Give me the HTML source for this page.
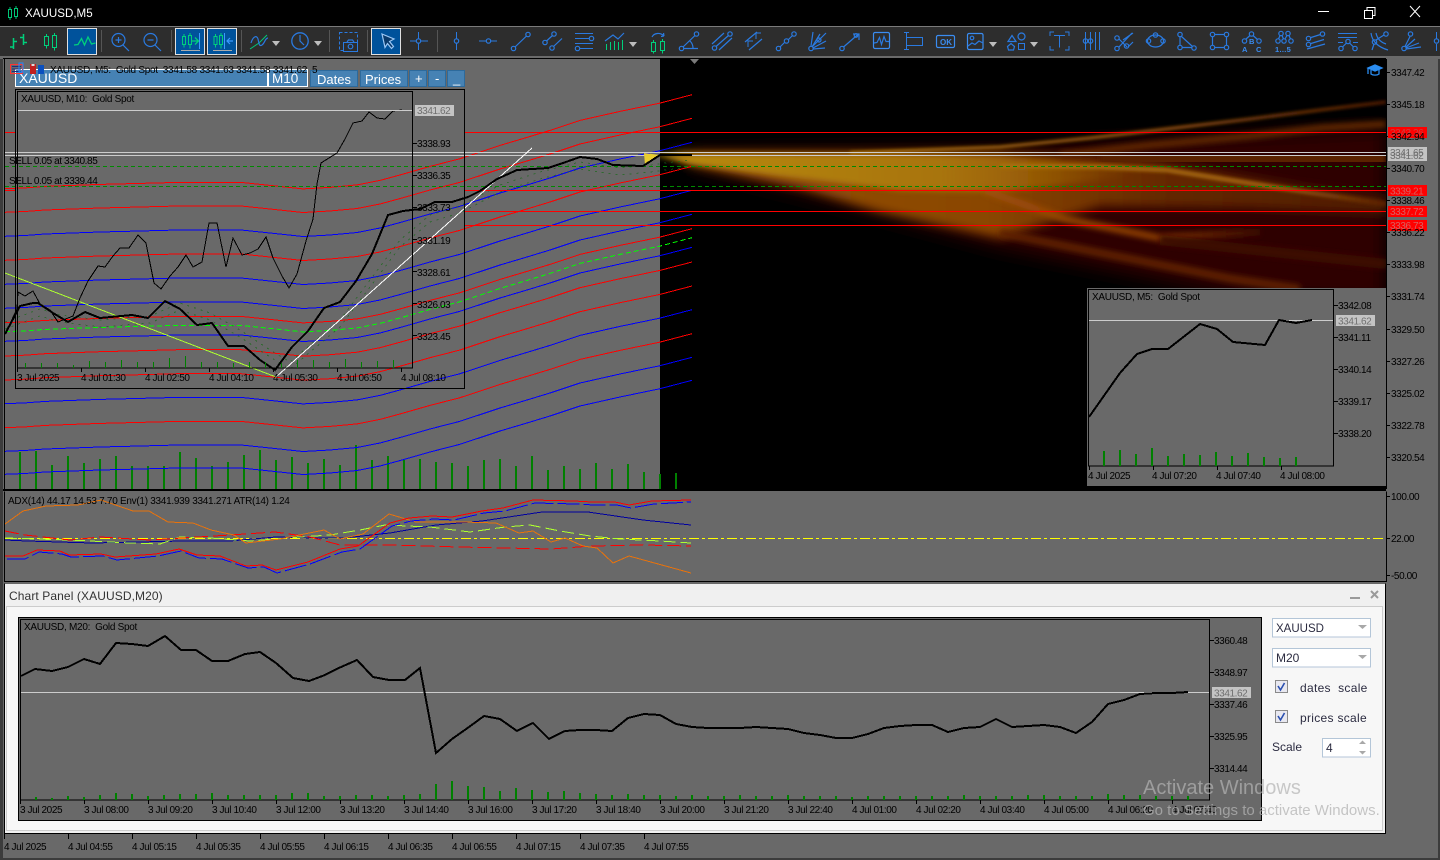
<!DOCTYPE html>
<html>
<head>
<meta charset="utf-8">
<title>XAUUSD,M5</title>
<style>
html,body{margin:0;padding:0;width:1440px;height:860px;overflow:hidden;background:#3c3c3c}
svg{display:block;position:absolute;left:0;top:0}
text{font-family:"Liberation Sans",sans-serif;font-size:10px;letter-spacing:-.4px;fill:#000;white-space:pre}
.g{fill:#6f6f6f}
.t{letter-spacing:-.28px}
.u{font-size:13px;letter-spacing:0;fill:#fff}
.p{font-size:12px;letter-spacing:.3px;fill:#2b2b40}
.w1{font-size:20px;letter-spacing:0;fill:#b4b4b4;opacity:.7}
.w2{font-size:15px;letter-spacing:0;fill:#b4b4b4;opacity:.75}
.c{shape-rendering:crispEdges}
</style>
</head>
<body>
<svg width="1440" height="860" viewBox="0 0 1440 860" xmlns="http://www.w3.org/2000/svg">
<defs>
<filter id="b0" x="-10%" y="-50%" width="120%" height="200%"><feGaussianBlur stdDeviation="9"/></filter>
<filter id="b1" x="-10%" y="-50%" width="120%" height="200%"><feGaussianBlur stdDeviation="5"/></filter>
<filter id="b2" x="-10%" y="-100%" width="120%" height="300%"><feGaussianBlur stdDeviation="1.6"/></filter>
<filter id="b3" x="-10%" y="-100%" width="120%" height="300%"><feGaussianBlur stdDeviation="3"/></filter>
<clipPath id="heat"><rect x="660" y="59" width="726" height="430"/></clipPath>
<linearGradient id="gOr" gradientUnits="userSpaceOnUse" x1="660" y1="0" x2="1386" y2="0">
<stop offset="0" stop-color="#94520a"/><stop offset=".45" stop-color="#8a4604"/><stop offset=".7" stop-color="#642800"/><stop offset="1" stop-color="#4e1a00"/>
</linearGradient>
<linearGradient id="gGo" gradientUnits="userSpaceOnUse" x1="660" y1="0" x2="1130" y2="0">
<stop offset="0" stop-color="#b88a10"/><stop offset=".6" stop-color="#a8740c"/><stop offset="1" stop-color="#a8740c" stop-opacity="0"/>
</linearGradient>
<linearGradient id="gUp" gradientUnits="userSpaceOnUse" x1="850" y1="0" x2="1386" y2="0">
<stop offset="0" stop-color="#a8740c"/><stop offset=".55" stop-color="#a05a12"/><stop offset="1" stop-color="#5a1e00"/>
</linearGradient>
<linearGradient id="gMid" gradientUnits="userSpaceOnUse" x1="1000" y1="0" x2="1386" y2="0">
<stop offset="0" stop-color="#a8700e"/><stop offset=".7" stop-color="#9a5a10"/><stop offset="1" stop-color="#5a2000"/>
</linearGradient>
<linearGradient id="gLow" gradientUnits="userSpaceOnUse" x1="985" y1="0" x2="1260" y2="0">
<stop offset="0" stop-color="#a05008"/><stop offset=".6" stop-color="#8a3c04"/><stop offset="1" stop-color="#3a0a00"/>
</linearGradient>
<path id="band" fill="none" d="M5 474.3L25 473.5 45 472 100 470 140 469 178 468 241 468 270 471 303 474.5 330 473 357 470.5 380 466 402 460 430 452 460 444.3 500 431 527 423 550 416 580 406 620 397 660 388.7 692 380.3"/>
</defs>

<!-- window -->
<rect width="1440" height="860" fill="#3c3c3c"/>
<rect width="1440" height="26" fill="#000"/>
<rect y="26" width="1440" height="1" fill="#7a7a7a"/>
<rect y="27" width="1440" height="29" fill="#2d2d2d"/>
<rect y="56" width="1440" height="3" fill="#6a6a6a"/>
<rect x="3" y="58" width="1435" height="800" fill="#696969"/>
<rect x="3" y="58" width="1383" height="1" fill="#000"/>
<rect class="c" x="4" y="59" width="1" height="430" fill="#000"/>

<!-- title bar -->
<g class="c" fill="none" stroke="#00c878">
<rect x="8.5" y="9.5" width="3" height="8"/><path d="M10 7v2M10 18v2"/>
<rect x="14.5" y="8.5" width="3" height="8"/><path d="M16 6v2M16 17v2"/>
</g>
<text x="25" y="17" style="font-size:11.6px;letter-spacing:0;fill:#fff">XAUUSD,M5</text>
<g fill="none" stroke="#fff" stroke-width="1">
<path class="c" d="M1318 11.5h11"/>
<path class="c" d="M1364.5 10.5h8v8h-8zM1367 10V7.5h8v8h-2.5"/>
<path d="M1410 6l10 11M1420 6l-10 11"/>
</g>

<!-- toolbar separators -->
<g class="c" fill="#555">
<rect x="101" y="30" width="1" height="22"/><rect x="171" y="30" width="1" height="22"/><rect x="241" y="30" width="1" height="22"/><rect x="329" y="30" width="1" height="22"/><rect x="367" y="30" width="1" height="22"/><rect x="437" y="30" width="1" height="22"/>
</g>
<!-- selected buttons -->
<g fill="#00529b" stroke="#e0e0e0" class="c">
<rect x="67.5" y="28.5" width="29" height="26"/>
<rect x="175.5" y="28.5" width="29" height="26"/>
<rect x="207.5" y="28.5" width="29" height="26"/>
<rect x="371.5" y="28.5" width="29" height="26"/>
</g>

<!-- green icons -->
<g fill="none" stroke="#00d07c" stroke-width="1.3">
<path stroke-width="1.5" d="M13.5 38v11M10 47h3.5M13.5 41.500h3.5M23.500 34v11M20 37.500h3.500M23.500 42.500h3.500"/>
<rect class="c" x="44.5" y="36.5" width="4" height="9"/><path class="c" d="M46.5 34v2.5M46.5 45.5v3"/>
<rect class="c" x="52.5" y="35.5" width="4" height="12"/><path class="c" d="M54.5 33v2.5M54.5 47.5v3"/>
<path d="M74 45l4-.5 3.5-6 3 6.5 3.5-8 3.5 7 4-1"/>
<rect class="c" x="182.5" y="36.5" width="3" height="8"/><path class="c" d="M184 34v2.5M184 44.5v3"/>
<rect class="c" x="188.5" y="35.5" width="3" height="9"/><path class="c" d="M190 33v2.5M190 44.5v4"/>
<path d="M191 41h7M195 37.5l3.5 3.5-3.5 3.5"/>
<rect class="c" x="214" y="36.5" width="3" height="8"/><path class="c" d="M215.5 34v2.5M215.5 44.5v3"/>
<rect class="c" x="219.5" y="35.5" width="3" height="9"/><path class="c" d="M221 33v2.5M221 44.5v4"/>
<path d="M250 49l9-6 8-8" stroke="#00c878" stroke-width="1"/>
<rect class="c" x="651.5" y="42.5" width="4" height="9"/><path class="c" d="M653.5 40v2.5M653.5 51.5v2"/>
<rect class="c" x="660.5" y="41.5" width="4" height="9"/><path class="c" d="M662.5 39v2.5M662.5 50.5v3"/>
<path class="c" d="M606.5 44v6M610.5 42v8M614.5 41v9M618.5 42v8M622.5 40v10"/>
</g>

<!-- blue icons -->
<g fill="none" stroke="#2a7ae0" stroke-width="1.2">
<circle cx="118.5" cy="40" r="6.5"/><path d="M123 45l6 6M115.5 40h6M118.5 37v6"/>
<circle cx="150.5" cy="40" r="6.5"/><path d="M155 45l6 6M147.5 40h6"/>
<path class="c" d="M199.5 33v16" stroke="#3a9bff"/><path class="c" d="M181 50.5h19M213 50.5h19" stroke="#aaa"/>
<path class="c" d="M224.5 33v16" stroke="#3a9bff"/>
<path d="M233 41h-6M230 38l-3 3 3 3" stroke="#3a9bff"/>
<path d="M251 43c2-7 6-8 7-4s1 8 4 6 3-7 6-7"/>
<circle cx="300" cy="41" r="8.2" stroke-width="1.3"/><path d="M300 35v6l4 4"/>
<rect x="339.5" y="32.5" width="18" height="18" stroke-dasharray="3 2" class="c"/>
<rect x="343.5" y="42.5" width="14" height="9" fill="#2d2d2d" class="c"/><path d="M347 42l1.5-2h4l1.5 2"/><circle cx="350.5" cy="46.5" r="2.3"/>
<path d="M382 34l12 5-4.5 2.5 4 5-2 2-4-5-2.5 4z" stroke="#9cc7f5" fill="#0a3a6b" stroke-width="1.2"/>
<path class="c" d="M418.5 32v7M418.5 43v7M410 41h6M421 41h7"/><circle cx="418.5" cy="41" r="2.2"/>
<path class="c" d="M456.5 32v6.5M456.5 43v7"/><circle cx="456.5" cy="41" r="2.2"/>
<path class="c" d="M479 41h7M491 41h6"/><circle cx="488.5" cy="41" r="2.2"/>

<!-- trend -->
<circle cx="513.5" cy="48.5" r="2.2"/><circle cx="528" cy="34.5" r="2.2"/><path d="M515 47l11.5-11"/>
<!-- two lines -->
<circle cx="545" cy="42.5" r="2.2"/><circle cx="554" cy="34" r="2.2"/><path d="M546.5 41l6-5.5"/>
<circle cx="552" cy="48" r="2.2"/><path d="M553.5 46.5l8.5-8"/>
<!-- lines circles -->
<path class="c" d="M575 33.5h18M575 38.5h14M575 43.5h18M580 48.5h13"/><circle cx="591.5" cy="38.5" r="2.2"/><circle cx="577.5" cy="48.5" r="2.2"/>
<path d="M605 41l8-6 5 4 6-6"/>
<!-- candle arrow -->
<path d="M652 37c2-4 8-5 12-1M664 36l-.5-3M664 36l-3 .5"/>
<!-- angle -->
<circle cx="681.5" cy="48.5" r="2.2"/><circle cx="696.5" cy="34" r="2.2"/><path d="M683 47l12-11.5M684 48.5h14M690 41c2 2 3 4 3 7"/>
<!-- parallels -->
<circle cx="714.5" cy="48" r="2.2"/><circle cx="730" cy="34" r="2.2"/><path d="M716 46.5l12.5-11M712 44l12-11M719 50l13-12"/>
<!-- stairs -->
<path d="M745 42l12-10M749 50l13-11"/><path class="c" d="M756 39v-6h5M748 47v-6h5"/>
<!-- three points -->
<circle cx="778.5" cy="48.5" r="2.2"/><circle cx="786.5" cy="41" r="2.2"/><circle cx="794" cy="34" r="2.2"/><path d="M780 47l5-5M788 40l4.500-4.500"/>
<!-- fan -->
<circle cx="811" cy="48.500" r="2.200"/><path d="M812 47l14-14M811 46l2-14M812 47l8-13M813 48l13-7M813 49l12-1"/><circle cx="819" cy="40" r="2"/>
<!-- arrow -->
<circle cx="842" cy="48.500" r="2.200"/><path d="M843.500 47l15-13M853 34h6v6"/><circle cx="856" cy="35.500" r="1.800"/>
<!-- box wave -->
<rect x="873.500" y="32.500" width="16" height="16" rx="1.500" stroke="#3a8cf0"/><path d="M874 43l3-.5 2.500-5 2 7 2.500-8 2 5h3"/>
<!-- cycle rect -->
<path class="c" d="M906.500 32v18M904 32.500h5M904 49.500h5"/><rect class="c" x="906.500" y="37.500" width="16" height="8"/>
<!-- ok -->
<rect x="936.500" y="35.500" width="18" height="12" rx="1.500" stroke="#3a8cf0"/>
<!-- image -->
<rect x="967.500" y="33.500" width="15.500" height="16" rx="1.500" stroke="#3a8cf0"/><circle cx="972" cy="38" r="1.800"/><path d="M968 46l4-3 3 1.500 4-3.500 4 2"/>
<!-- shapes -->
<path d="M1008 41.500l4-6 4 6zM1008.500 50l-1-3.500 3.500-3 3.500 3-1 3.500z"/><circle cx="1021.500" cy="36.500" r="3.500"/><rect class="c" x="1018.500" y="43.500" width="6" height="6"/>
<!-- text T -->
<path class="c" d="M1050 36v-4h4M1065 32h4v4M1050 46v4h4M1065 50h4v-4M1054 35.500h11M1059.500 35.500v12"/>
<!-- lines with circles -->
<path class="c" d="M1085.500 32v18M1090.500 32v18M1095.500 32v18M1099.500 32v18"/><circle cx="1085.500" cy="41" r="2.200"/><circle cx="1090.500" cy="41" r="2.200"/>
<!-- cross -->
<circle cx="1117" cy="38" r="2.200"/><circle cx="1117" cy="48.500" r="2.200"/><circle cx="1126.500" cy="46" r="2.200"/><path d="M1119 39l8 8M1119 47l13-14M1123 40l10-7M1128 47l5-5"/>
<!-- ellipse -->
<circle cx="1155.500" cy="35" r="2.200"/><circle cx="1148.500" cy="41" r="2.200"/><circle cx="1163" cy="41" r="2.200"/><ellipse cx="1155.500" cy="41" rx="8" ry="6"/>
<!-- triangle -->
<circle cx="1180" cy="34.500" r="2.200"/><circle cx="1180" cy="47.500" r="2.200"/><circle cx="1194" cy="48" r="2.200"/><path d="M1180 36.500v9M1182 47.500h10M1181.500 36.500l11 10"/>
<!-- square -->
<rect x="1212.500" y="34.500" width="14" height="13"/><circle cx="1212.500" cy="34.500" r="2.200" fill="#2d2d2d"/><circle cx="1226.500" cy="34.500" r="2.200" fill="#2d2d2d"/><circle cx="1212.500" cy="47.500" r="2.200" fill="#2d2d2d"/><circle cx="1226.500" cy="47.500" r="2.200" fill="#2d2d2d"/>
<!-- ABC -->
<circle cx="1251.500" cy="34" r="2.200"/><circle cx="1244.500" cy="41" r="2.200"/><circle cx="1259" cy="41" r="2.200"/><path d="M1250 35.500l-4 3.500M1253 35.500l4.500 4"/>
<!-- 1..5 -->
<circle cx="1278" cy="41" r="2.200"/><circle cx="1284" cy="41" r="2.200"/><circle cx="1291" cy="41" r="2.200"/><circle cx="1281" cy="33.500" r="2.200"/><circle cx="1288" cy="33.500" r="2.200"/><path d="M1280 35.500l-1.500 3.500M1282 35.500l1.500 3.500M1287 35.500l-2 3.500M1289 35.500l1.500 3.500"/>
<!-- 1306 -->
<circle cx="1308.500" cy="38.500" r="2.200"/><circle cx="1308.500" cy="44.500" r="2.200"/><circle cx="1322.500" cy="34" r="2.200"/><path d="M1311 37.500l9.500-3M1311 43.500l13-4M1307 49l18-5"/>
<!-- 1338 -->
<path class="c" d="M1338 33.500h19M1338 37.500h19M1338 42.500h5M1353 42.500h5"/><circle cx="1341" cy="48.500" r="2.200"/><circle cx="1348" cy="41.500" r="2.200"/><circle cx="1355" cy="48.500" r="2.200"/><path d="M1342.500 47l4-4M1349.500 43l4 4"/>
<!-- 1370 -->
<circle cx="1374.500" cy="42" r="2.200"/><circle cx="1386" cy="34" r="2.200"/><path d="M1371 33c1 8 7 14 17 17M1376 33c1 5 4 9 10 11M1376 40l8-5M1372 50l2-6"/>
<!-- 1402 -->
<circle cx="1404" cy="48.500" r="2.200"/><circle cx="1410.500" cy="34" r="2.200"/><path d="M1405 46.500l5-10M1406 47l9-8M1406 48l13-5M1406 49l15-2"/>
<path class="c" d="M1436.500 32v7M1436.500 44v7"/><circle cx="1436.500" cy="41" r="2.200"/>
</g>
<g fill="#bdbdbd"><path d="M272 41h8l-4 5zM314 41h8l-4 5zM629 42h8l-4 5zM989 42h8l-4 5zM1030 42h8l-4 5z"/></g>
<text x="940" y="45" style="font-size:8px;letter-spacing:0;fill:#3a8cf0;font-weight:bold">OK</text>
<text x="1249" y="44" style="font-size:7.500px;letter-spacing:0;fill:#3a8cf0;font-weight:bold">B</text>
<text x="1242" y="52" style="font-size:7.500px;letter-spacing:0;fill:#3a8cf0;font-weight:bold">A</text>
<text x="1256" y="52" style="font-size:7.500px;letter-spacing:0;fill:#3a8cf0;font-weight:bold">C</text>
<text x="1275" y="52" style="font-size:7.500px;letter-spacing:.3px;fill:#3a8cf0;font-weight:bold">1...5</text>

<!-- ===== main chart ===== -->
<rect x="660" y="59" width="726" height="430" fill="#000"/>

<!-- heatmap -->
<g clip-path="url(#heat)">
<polygon filter="url(#b0)" fill="#2e0400" points="690,152 1000,148 1200,136 1386,128 1386,300 1250,298 1000,248 800,194 690,166"/>
<polygon filter="url(#b1)" fill="url(#gOr)" points="670,152 1000,152 1150,160 1300,186 1386,198 1386,214 1250,208 1100,206 1000,238 880,212 800,188 690,165"/>
<polygon filter="url(#b3)" fill="url(#gGo)" points="650,154 900,154 1000,156 1130,166 1130,176 1000,192 900,190 780,176 690,164"/>
<g fill="none">
<path filter="url(#b2)" stroke="url(#gUp)" stroke-width="3" d="M850 153L1000 147 1090 138 1150 131 1250 119 1320 110 1386 102"/>
<path filter="url(#b3)" stroke="#602800" stroke-width="7" d="M1060 155L1150 145 1250 136 1320 128 1386 124"/>
<path filter="url(#b3)" stroke="#5a2000" stroke-width="18" d="M1100 158L1386 160"/>
<path filter="url(#b2)" stroke="url(#gMid)" stroke-width="5" d="M1000 166L1100 167 1167 170 1267 186 1386 204"/>
<path filter="url(#b3)" stroke="url(#gLow)" stroke-width="7" d="M985 190L1000 196 1065 219 1160 238 1260 232"/>
<path filter="url(#b3)" stroke="#5e2400" stroke-width="8" d="M1000 233L1100 253 1233 279 1300 289"/>
<path filter="url(#b3)" stroke="#3e1000" stroke-width="10" d="M1160 240L1386 264"/>
</g>
</g>

<!-- volume bars main -->
<path class="c" stroke="#008000" stroke-width="2" fill="none" d="M20 489V452M36 489V451M52 489V465M68 489V456M84 489V463M100 489V459M116 489V456M132 489V466M148 489V466M164 489V466M180 489V452M196 489V458M212 489V466M228 489V462M244 489V455M260 489V450M276 489V460M292 489V457M308 489V463M324 489V459M340 489V465M356 489V445M372 489V460M388 489V456M404 489V460M420 489V459M436 489V462M452 489V463M468 489V466M484 489V460M500 489V459M516 489V466M532 489V456M548 489V470M564 489V466M580 489V469M596 489V463M612 489V469M628 489V464M644 489V472M660 489V474M676 489V473"/>

<!-- bands -->
<g class="c" stroke-width="1">
<use href="#band" y="-285.6" stroke="#f00"/>
<use href="#band" y="-262" stroke="#f00"/>
<use href="#band" y="-238" stroke="#00f"/>
<use href="#band" y="-214" stroke="#f00"/>
<use href="#band" y="-190" stroke="#00f"/>
<use href="#band" y="-166" stroke="#00f"/>
<use href="#band" y="-151.6" stroke="#f00"/>
<use href="#band" y="-142.6" stroke="#0f0" stroke-dasharray="5 3"/>
<use href="#band" y="-133" stroke="#00f"/>
<use href="#band" y="-118.3" stroke="#f00"/>
<use href="#band" y="-94.3" stroke="#f00"/>
<use href="#band" y="-70.6" stroke="#00f"/>
<use href="#band" y="-46.6" stroke="#f00"/>
<use href="#band" y="-23" stroke="#00f"/>
<use href="#band" y="0" stroke="#00f"/>
</g>

<!-- dotted MA waves -->
<g fill="none" stroke="#1a6a1a" stroke-dasharray="2 5" class="c" opacity=".7">
<path d="M5 322L40 309 60 315 100 320 150 316 180 303 210 313 240 330 270 350 290 362 310 345 340 320 370 280 400 240 430 215 460 206 500 185 540 172 580 162 620 168 650 165 690 160"/>
<path d="M5 329L40 316 60 322 100 327 150 323 180 310 210 320 240 337 270 357 290 369 310 352 340 327 370 287 400 247 430 222 460 213 500 192 540 179 580 169 620 175 650 172 690 167"/>
</g>

<!-- horizontal lines -->
<g class="c">
<path fill="none" stroke="#f00" d="M5 132.500h10M465 132.500H1386M5 190.500h11M465 190.500H1386M465 211.500H1386M465 225.500H1386"/>
<path fill="none" stroke="#ccc" d="M5 152.500H1386M5 155.500H1386"/>
<path fill="none" stroke="#008a00" stroke-dasharray="4 3" d="M5 166.500H1386M5 186.500H1386"/>
</g>
<text x="9" y="164">SELL 0.05 at 3340.85</text>
<text x="9" y="184">SELL 0.05 at 3339.44</text>

<!-- white + lime trend -->
<path d="M5 273L276 377" stroke="#adff2f" fill="none" class="c"/>
<path d="M276 377L532 148" stroke="#fff" fill="none" class="c"/>

<!-- yellow block -->
<polygon points="644,153 660,155 645,165" fill="#e8cc30"/>

<!-- M10 thin line -->
<polyline fill="none" stroke="#000" class="c" points="5,334 17,309 18,292 25,296 33,291 40,304 50,310 58,322 73,316 80,298 88,281 98,266 105,267 113,256 120,248 129,248 138,235 146,243 154,283 161,289 170,276 178,267 186,255 193,267 202,262 209,223 217,223 226,267 233,238 242,255 250,253 258,249 266,237 273,258 282,276 289,288 297,274 306,241 313,219 317,184 321,163 337,153 345,139 353,123 362,121 369,112 377,118 385,119 393,111 402,110"/>

<!-- M5 thick price line -->
<polyline fill="none" stroke="#000" stroke-width="2" class="c" points="5,334 20,306 33,303 38,303 53,313 68,322 85,312 100,318 132,315 148,318 165,301 180,309 197,325 212,323 228,346 244,346 260,360 275,370 292,347 308,331 324,308 340,302 356,281 372,254 388,215 403,211 420,209 435,202 452,202 468,197 480,191 497,179 517,170 548,168 563,163 580,157 597,159 613,165 643,166 660,155 692,155"/>

<!-- small triangle -->
<path d="M690 59h9l-4.500 5z" fill="#7a7a7a"/>

<!-- widgets -->
<g class="c">
<rect x="15.500" y="69.500" width="252" height="17" fill="#4682b4" stroke="#fff"/>
<rect x="268.500" y="69.500" width="39" height="17" fill="#4682b4" stroke="#fff"/>
<g stroke="#2d6a9c" stroke-width="1" fill="#4682b4">
<rect x="310.500" y="70.500" width="47" height="16"/>
<rect x="360.500" y="70.500" width="47" height="16"/>
<rect x="409.500" y="70.500" width="17" height="16"/>
<rect x="428.500" y="70.500" width="17" height="16"/>
<rect x="447.500" y="70.500" width="17" height="16"/>
</g>
</g>
<text x="19" y="83" class="u" style="font-size:14px">XAUUSD</text>
<text x="272" y="83" class="u" style="font-size:13.500px">M10</text>
<text x="317" y="84" class="u">Dates</text>
<text x="365" y="84" class="u">Prices</text>
<text x="415" y="83" class="u">+</text>
<text x="435" y="83" class="u">-</text>
<text x="453" y="83" class="u">_</text>

<!-- header over widgets -->
<text x="50" y="73" class="t">XAUUSD, M5:  Gold Spot  3341.58 3341.63 3341.58 3341.62  5</text>
<g class="c">
<rect x="10.500" y="64.500" width="12" height="9" fill="none" stroke="#f33"/>
<path d="M12 66.500h9M12 69h9M12 71.500h9" stroke="#1a2a80"/>
<path d="M19 63h4v9h-4z" fill="none" stroke="#28f" stroke-width="1"/>
<rect x="30" y="64" width="6" height="10" fill="#c02020"/><rect x="31.500" y="64" width="3" height="2" fill="#ddd"/>
<rect x="38" y="65" width="6" height="9" fill="#0a50c0"/>
</g>

<!-- M10 subchart -->
<g class="c" fill="none" stroke="#000">
<rect x="15.500" y="89.500" width="449" height="299"/>
<rect x="17.500" y="91.500" width="395" height="276.500"/>
<path d="M413 143.500h4M413 175.500h4M413 207.500h4M413 239.500h4M413 271.500h4M413 303.500h4M413 335.500h4M17.500 368v4M81.500 368v4M145.500 368v4M209.500 368v4M273.500 368v4M337.500 368v4M401.500 368v4"/>
<path d="M18 110.500H412" stroke="#ccc"/>
<path stroke="#008000" stroke-width="1" d="M25.500 368v-5M41.500 368v-5M57.500 368v-5M73.500 368v-3M89.500 368v-7M105.500 368v-6M121.500 368v-8M137.500 368v-6M153.500 368v-6M169.500 368v-10M185.500 368v-12M201.500 368v-6M217.500 368v-6M233.500 368v-5M249.500 368v-6M265.500 368v-6M281.500 368v-5M297.500 368v-8M313.500 368v-8M329.500 368v-6M345.500 368v-9M361.500 368v-6M377.500 368v-7M393.500 368v-8"/>
</g>
<text x="21" y="102" class="t">XAUUSD, M10:  Gold Spot</text>
<rect class="c" x="415" y="105" width="39" height="11" fill="#c4c4c4"/>
<text x="417" y="114" class="g">3341.62</text>
<text x="417" y="147">3338.93</text>
<text x="417" y="179">3336.35</text>
<text x="417" y="211">3333.73</text>
<text x="417" y="244">3331.19</text>
<text x="417" y="276">3328.61</text>
<text x="417" y="308">3326.03</text>
<text x="417" y="340">3323.45</text>
<text x="17" y="381">3 Jul 2025</text>
<text x="81" y="381">4 Jul 01:30</text>
<text x="145" y="381">4 Jul 02:50</text>
<text x="209" y="381">4 Jul 04:10</text>
<text x="273" y="381">4 Jul 05:30</text>
<text x="337" y="381">4 Jul 06:50</text>
<text x="401" y="381">4 Jul 08:10</text>

<!-- M5 inset -->
<rect x="1087" y="288" width="299" height="198" fill="#696969"/>
<g class="c" fill="none" stroke="#000">
<rect x="1088.500" y="289.500" width="245" height="176.500"/>
<path d="M1334 305.500h4M1334 337.500h4M1334 369.500h4M1334 401.500h4M1334 433.500h4M1089.500 466v4M1153.500 466v4M1217.500 466v4M1281.500 466v4"/>
<path d="M1089 320.500H1333" stroke="#ccc"/>
<path stroke="#008000" stroke-width="2" d="M1104 466V451M1120 466V450M1136 466V454M1152 466V448M1168 466V456M1184 466V454M1200 466V455M1216 466V452M1232 466V456M1248 466V453M1264 466V457M1280 466V458M1296 466V457"/>
</g>
<polyline fill="none" stroke="#000" stroke-width="2" class="c" points="1089,417 1120,373 1137,354 1152,349 1168,349 1200,324 1217,329 1233,342 1265,345 1279,320 1296,323 1312,320"/>
<text x="1092" y="300" class="t">XAUUSD, M5:  Gold Spot</text>
<rect class="c" x="1336" y="315" width="39" height="11" fill="#c4c4c4"/>
<text x="1338" y="324.500" class="g">3341.62</text>
<text x="1338" y="309">3342.08</text>
<text x="1338" y="341">3341.11</text>
<text x="1338" y="373">3340.14</text>
<text x="1338" y="405">3339.17</text>
<text x="1338" y="437">3338.20</text>
<text x="1088" y="479">4 Jul 2025</text>
<text x="1152" y="479">4 Jul 07:20</text>
<text x="1216" y="479">4 Jul 07:40</text>
<text x="1280" y="479">4 Jul 08:00</text>

<!-- grad cap -->
<g fill="none" stroke="#2a8cf0" stroke-width="1.300"><path d="M1368 68l7-3 7 3-7 3z" fill="#2a8cf0"/><path d="M1371 70v4c2 1.500 6 1.500 8 0v-5M1368 68v6"/></g>

<!-- price axis -->
<rect class="c" x="1386" y="59" width="1" height="430" fill="#000"/>
<path class="c" stroke="#000" d="M1386 72.500h4M1386 104.500h4M1386 136.500h4M1386 168.500h4M1386 200.500h4M1386 232.500h4M1386 264.500h4M1386 296.500h4M1386 329.500h4M1386 361.500h4M1386 393.500h4M1386 425.500h4M1386 457.500h4"/>
<text x="1391" y="76">3347.42</text>
<text x="1391" y="108">3345.18</text>
<text x="1391" y="172">3340.70</text>
<text x="1391" y="204">3338.46</text>
<text x="1391" y="268">3333.98</text>
<text x="1391" y="300">3331.74</text>
<text x="1391" y="333">3329.50</text>
<text x="1391" y="365">3327.26</text>
<text x="1391" y="397">3325.02</text>
<text x="1391" y="429">3322.78</text>
<text x="1391" y="461">3320.54</text>
<g class="c">
<rect x="1388" y="127" width="39" height="11" fill="#f00"/>
<rect x="1388" y="147" width="39" height="14" fill="#c4c4c4"/>
<rect x="1388" y="185" width="39" height="11" fill="#f00"/>
<rect x="1388" y="206" width="39" height="11" fill="#f00"/>
<rect x="1388" y="220" width="39" height="11" fill="#f00"/>
</g>
<text x="1390" y="136" style="fill:#c94040">3343.26</text>
<text x="1391" y="140">3342.94</text>
<text x="1390" y="156" class="g">3341.65</text>
<text x="1390" y="159" class="g">3341.62</text>
<text x="1390" y="194.500" style="fill:#d86060">3339.21</text>
<text x="1390" y="215" style="fill:#d86060">3337.72</text>
<text x="1390" y="229" style="fill:#d86060">3336.73</text>
<text x="1391" y="236">3336.22</text>

<!-- ===== indicator ===== -->
<rect class="c" x="3" y="489" width="1383" height="2" fill="#000"/>
<rect x="4" y="491" width="1382" height="90" fill="#696969"/>
<path class="c" stroke="#000" fill="none" d="M4.500 491.500V581.500H1386.500V491.500M1386 496.500h4M1386 538.500h4M1386 575.500h4"/>
<path class="c" d="M5 538.500H1386" stroke="#ff0" stroke-width="1" stroke-dasharray="10 3 3 3" fill="none"/>
<g fill="none" class="c">
<polyline stroke="#0000a0" points="5,540 27,541 92,543 184,541 230,541 276,537 312,538 344,538 390,533 436,525 482,521 542,512 588,512 643,520 691,525"/>
<polyline stroke="#adff2f" stroke-dasharray="12 5" points="5,538 70,540 130,543 160,544 180,537 210,538 250,541 300,537 330,535 360,530 385,525 430,527 470,532 505,527 530,525 560,531 590,536 620,539 660,541 691,543"/>
<polyline stroke="#f00" stroke-dasharray="14 5" points="5,531 25,535 70,540 100,537 150,540 230,535 275,532 310,537 340,545 390,545 459,547 551,549 592,546 643,545 691,546"/>
<polyline stroke="#e8720c" points="5,524 23,511 46,506 78,505 101,500 133,511 149,511 168,522 193,523 211,530 234,535 246,543 280,539 324,530 340,539 363,534 389,514 416,522 464,522 496,523 519,533 533,531 551,542 565,538 583,546 597,548 613,563 629,556 691,573"/>
<polyline stroke="#00f" stroke-width="1" stroke-dasharray="22 4" points="7,559 25,559 39,552 62,554 71,557 103,556 117,560 158,556 181,551 199,558 222,559 248,568 264,567 277,573 310,564 342,552 360,549 392,526 411,521 434,519 454,520 484,513 505,511 535,503 576,504 594,505 617,505 631,508 654,504 691,502"/>
<polyline stroke="#f00" stroke-width="1" points="5,556 23,556 37,550 60,551 69,555 101,554 115,557 156,554 179,549 197,555 220,556 246,566 262,565 276,570 308,562 340,549 358,546 390,523 409,518 432,516 452,517 482,511 503,508 533,500 574,501 592,502 615,502 629,505 652,501 691,500"/>
</g>
<text x="8" y="504" class="t">ADX(14) 44.17 14.53 7.70 Env(1) 3341.939 3341.271 ATR(14) 1.24</text>
<text x="1391" y="500">100.00</text>
<text x="1391" y="542">22.00</text>
<text x="1391" y="579">-50.00</text>

<!-- ===== chart panel ===== -->
<rect class="c" x="4" y="584" width="1382" height="250" fill="#f0f0f0"/>
<path class="c" stroke="#000" fill="none" d="M4.500 583.500V833.500H1385.500V583.500"/>
<rect class="c" x="6.500" y="606.500" width="1376" height="224" fill="#f7f7f7" stroke="#ccc"/>
<text x="9" y="600" style="font-size:12px;letter-spacing:.1px;fill:#333">Chart Panel (XAUUSD,M20)</text>
<rect class="c" x="1350" y="597" width="10" height="2" fill="#9a9a9a"/>
<path d="M1371 591l7 7M1378 591l-7 7" stroke="#9a9a9a" stroke-width="2" fill="none"/>

<rect class="c" x="18.500" y="617.500" width="1243" height="203" fill="#696969" stroke="#000"/>
<g class="c" fill="none" stroke="#000">
<rect x="20.500" y="619.500" width="1189" height="180.500"/>
<path d="M1209 640.500h5M1209 672.500h5M1209 704.500h5M1209 736.500h5M1209 768.500h5M20.500 800v4M84.500 800v4M148.500 800v4M212.500 800v4M276.500 800v4M340.500 800v4M404.500 800v4M468.500 800v4M532.500 800v4M596.500 800v4M660.500 800v4M724.500 800v4M788.500 800v4M852.500 800v4M916.500 800v4M980.500 800v4M1044.500 800v4M1108.500 800v4M1172.500 800v4"/>
<path d="M21 692.500H1209" stroke="#ccc"/>
<path stroke="#008000" stroke-width="2" d="M36 800V797M52 800V798M68 800V796M84 800V797M100 800V795M116 800V793M132 800V794M148 800V796M164 800V795M180 800V794M196 800V794M212 800V793M228 800V795M244 800V795M260 800V795M276 800V795M292 800V793M308 800V793M324 800V796M340 800V796M356 800V795M372 800V795M388 800V796M404 800V795M420 800V794M436 800V784M452 800V781M468 800V786M484 800V787M500 800V791M516 800V788M532 800V790M548 800V792M564 800V791M580 800V793M596 800V794M612 800V795M628 800V794M644 800V795M660 800V795M676 800V796M692 800V795M708 800V796M724 800V796M740 800V795M756 800V796M772 800V796M788 800V795M804 800V796M820 800V796M836 800V796M852 800V797M868 800V796M884 800V796M900 800V796M916 800V796M932 800V796M948 800V796M964 800V795M980 800V796M996 800V796M1012 800V796M1028 800V795M1044 800V795M1060 800V796M1076 800V796M1092 800V796M1108 800V794M1124 800V795M1140 800V795M1156 800V796M1172 800V796M1188 800V796"/>
</g>
<polyline fill="none" stroke="#000" stroke-width="2" class="c" points="21,676 35,669 52,671 68,667 84,659 100,664 116,643 132,644 148,646 165,636 181,650 196,650 212,661 228,661 245,654 260,652 276,663 293,678 309,681 325,675 341,667 357,660 373,677 389,680 405,680 420,668 436,753 452,739 469,727 484,716 500,719 517,731 533,723 549,739 565,731 580,730 596,730 612,731 628,718 644,714 660,715 676,724 692,727 708,728 724,728 740,728 756,727 772,728 788,729 804,733 820,735 836,738 852,738 868,734 884,728 900,726 916,725 932,725 948,732 964,728 980,727 996,719 1012,727 1028,726 1044,725 1060,727 1076,733 1092,722 1108,704 1124,700 1140,694 1156,693 1172,693 1188,692"/>
<text x="24" y="630" class="t">XAUUSD, M20:  Gold Spot</text>
<rect class="c" x="1212" y="687" width="39" height="11" fill="#c4c4c4"/>
<text x="1214" y="696.500" class="g">3341.62</text>
<text x="1214" y="644">3360.48</text>
<text x="1214" y="676">3348.97</text>
<text x="1214" y="708">3337.46</text>
<text x="1214" y="740">3325.95</text>
<text x="1214" y="772">3314.44</text>
<text x="20" y="813">3 Jul 2025</text>
<text x="84" y="813">3 Jul 08:00</text>
<text x="148" y="813">3 Jul 09:20</text>
<text x="212" y="813">3 Jul 10:40</text>
<text x="276" y="813">3 Jul 12:00</text>
<text x="340" y="813">3 Jul 13:20</text>
<text x="404" y="813">3 Jul 14:40</text>
<text x="468" y="813">3 Jul 16:00</text>
<text x="532" y="813">3 Jul 17:20</text>
<text x="596" y="813">3 Jul 18:40</text>
<text x="660" y="813">3 Jul 20:00</text>
<text x="724" y="813">3 Jul 21:20</text>
<text x="788" y="813">3 Jul 22:40</text>
<text x="852" y="813">4 Jul 01:00</text>
<text x="916" y="813">4 Jul 02:20</text>
<text x="980" y="813">4 Jul 03:40</text>
<text x="1044" y="813">4 Jul 05:00</text>
<text x="1108" y="813">4 Jul 06:20</text>
<text x="1172" y="813">4 Jul 07:40</text>

<!-- panel controls -->
<g class="c" fill="#fff" stroke="#b4c6d8">
<rect x="1272.500" y="618.500" width="98" height="18.500"/>
<rect x="1272.500" y="648.500" width="98" height="18.500"/>
<rect x="1322.500" y="738.500" width="48" height="18.500"/>
</g>
<path fill="#a8a8a8" d="M1358 625h9l-4.500 4zM1358 655h9l-4.500 4zM1359 744h7l-3.500-3.500zM1359 751h7l-3.500 3.500z"/>
<g class="c"><rect x="1275.500" y="680.500" width="12" height="12" fill="#e8e8f0" stroke="#8a8a8a"/><rect x="1275.500" y="710.500" width="12" height="12" fill="#e8e8f0" stroke="#8a8a8a"/></g>
<path d="M1278 686l2.500 4 4-7M1278 716l2.500 4 4-7" fill="none" stroke="#2a4fb0" stroke-width="1.600"/>
<text x="1276" y="632" class="p" style="font-size:11.500px;letter-spacing:0">XAUUSD</text>
<text x="1276" y="662" class="p" style="letter-spacing:0">M20</text>
<text x="1300" y="692" class="p">dates  scale</text>
<text x="1300" y="722" class="p">prices scale</text>
<text x="1272" y="751" class="p" style="letter-spacing:0">Scale</text>
<text x="1326" y="752" class="p">4</text>

<!-- bottom axis -->
<rect class="c" x="0" y="858" width="1440" height="2" fill="#3c3c3c"/>
<path class="c" stroke="#000" fill="none" d="M4.500 834v5M68.500 834v5M132.500 834v5M196.500 834v5M260.500 834v5M324.500 834v5M388.500 834v5M452.500 834v5M516.500 834v5M580.500 834v5M644.500 834v5"/>
<text x="4" y="850">4 Jul 2025</text>
<text x="68" y="850">4 Jul 04:55</text>
<text x="132" y="850">4 Jul 05:15</text>
<text x="196" y="850">4 Jul 05:35</text>
<text x="260" y="850">4 Jul 05:55</text>
<text x="324" y="850">4 Jul 06:15</text>
<text x="388" y="850">4 Jul 06:35</text>
<text x="452" y="850">4 Jul 06:55</text>
<text x="516" y="850">4 Jul 07:15</text>
<text x="580" y="850">4 Jul 07:35</text>
<text x="644" y="850">4 Jul 07:55</text>

<!-- watermark -->
<text x="1143" y="794" class="w1">Activate Windows</text>
<text x="1143" y="815" class="w2">Go to Settings to activate Windows.</text>
</svg>
</body>
</html>
